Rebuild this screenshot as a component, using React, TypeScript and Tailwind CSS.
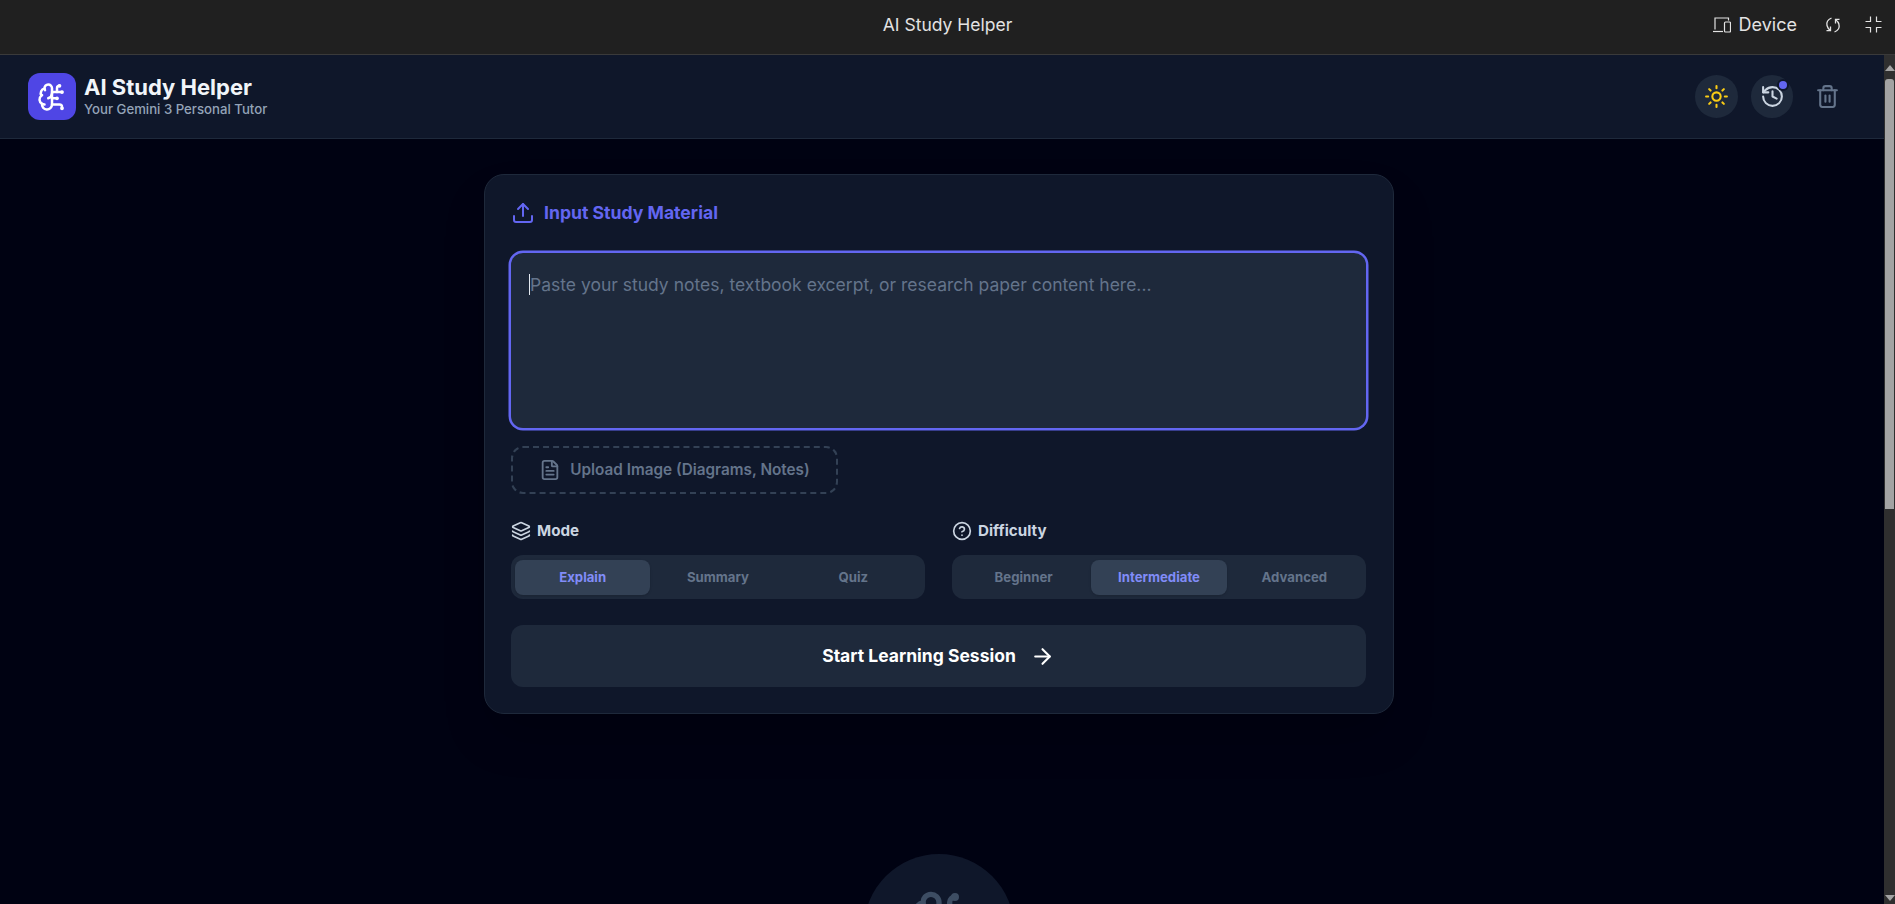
import React from "react";
import {
  ArrowRight,
  BrainCircuit,
  CircleHelp,
  FileText,
  History,
  Layers,
  Sun,
  Trash2,
  Upload,
} from "lucide-react";

const Segmented = ({ items, active }: { items: string[]; active: string }) => (
  <div className="grid grid-cols-3 h-11 px-1 pt-[5px] pb-1 rounded-xl bg-[#1e293b]">
    {items.map((item) => (
      <button
        key={item}
        className={`rounded-lg text-[13.2px] font-bold ${
          item === active
            ? "bg-[#334155] text-[#818cf8] shadow-sm"
            : "text-[#64748b]"
        }`}
      >
        {item}
      </button>
    ))}
  </div>
);

const TopBar = () => (
  <div className="relative flex items-center justify-end h-[55px] shrink-0 pb-[5px] bg-[#202020] border-b border-[#3a3a3a] text-[#e3e3e3]">
    <span className="absolute left-0 right-0 pt-[2px] text-center text-[17.5px]">AI Study Helper</span>
    <div className="flex items-center pr-[13px]">
      <svg width="18" height="16" viewBox="0 0 18 16" fill="none" stroke="currentColor" strokeWidth="1.2" className="mr-[8px]">
        <path d="M2 12.500V1h13.500v2.500" />
        <path d="M0 14.500h10" />
        <rect x="11.500" y="5" width="6" height="10" rx="1" />
      </svg>
      <span className="text-[18px] mr-[28px]">Device</span>
      <svg width="16" height="16" viewBox="0 0 16 16" fill="none" stroke="currentColor" strokeWidth="1.3" className="mr-[24px]">
        <path d="M6.500 1C3 2.500 1.300 5.500 2 8.500c.4 2 1.500 3.500 3.500 5" />
        <path d="M5.500 9.500v4.200H1.500" />
        <path d="M9.500 15c3.500-1.500 5.200-4.500 4.500-7.500-.4-2-1.500-3.500-3.500-5" />
        <path d="M10.500 6.500V2.300h4" />
      </svg>
      <svg width="17" height="17" viewBox="0 0 17 17" fill="none" stroke="currentColor" strokeWidth="1.2">
        <path d="M5.500 0.500v5H0.500M11.500 0.500v5H16.500M5.500 16.500v-5H0.500M11.500 16.500v-5H16.500" />
      </svg>
    </div>
  </div>
);

const Header = () => (
  <header className="flex items-center justify-between h-[84px] shrink-0 pl-[28px] pr-[36px] bg-[#0f172a] border-b border-[#1e293b]">
    <div className="flex items-center gap-2">
      <div className="flex items-center justify-center w-12 h-[47px] rounded-xl bg-[#4f46e5] text-white">
        <BrainCircuit size={30} strokeWidth={2} />
      </div>
      <div className="pb-[3px]">
        <h1 className="text-[22px] leading-[28px] font-bold text-[#f1f5f9]">AI Study Helper</h1>
        <p className="text-[13.2px] leading-[16px] font-medium text-[#94a3b8]">Your Gemini 3 Personal Tutor</p>
      </div>
    </div>
    <div className="flex items-center gap-[13px]">
      <button className="flex items-center justify-center w-[43px] h-[43px] rounded-full bg-[#1e293b] text-[#facc15]">
        <Sun size={25} />
      </button>
      <button className="relative flex items-center justify-center w-[42px] h-[43px] rounded-full bg-[#1e293b] text-[#cbd5e1]">
        <History size={25} />
        <span className="absolute top-[6px] right-[6px] w-2 h-2 rounded-full bg-[#6366f1] ring-2 ring-[#0f172a]" />
      </button>
      <button className="flex items-center justify-center w-[42px] h-[43px] text-[#64748b]">
        <Trash2 size={25} />
      </button>
    </div>
  </header>
);

const Card = () => (
  <section className="w-[910px] rounded-[20px] pl-[26px] pr-[27px] pt-[26px] pb-[26px] bg-[#0f172a] border border-[#1e293b] shadow-2xl">
    <div className="flex items-center gap-[9px] h-[24px] mb-[28px] text-[#6366f1]">
      <Upload size={24} />
      <h2 className="pt-[1px] text-[17.6px] font-bold">Input Study Material</h2>
    </div>
    <div className="h-[175px] px-[18px] py-[18px] rounded-xl ring-[2.5px] ring-[#6366f1] bg-[#1e293b] text-[17.5px] leading-[28px] text-[#64748b]">
      <span className="inline-block w-px h-[21px] -mb-[4px] bg-[#e2e8f0]" />
      Paste your study notes, textbook excerpt, or research paper content here...
    </div>
    <div className="flex items-center justify-center gap-[9px] w-[327px] h-[48px] mt-[18px] rounded-xl border-2 border-dashed border-[#334155] text-[15.3px] font-semibold text-[#64748b]">
      <FileText size={22} />
      Upload Image (Diagrams, Notes)
    </div>
    <div className="grid grid-cols-2 gap-[27px] mt-[27px]">
      <div>
        <div className="flex items-center gap-[6px] h-[20px] mb-[14px] text-[15.2px] font-bold text-[#cbd5e1]">
          <Layers size={20} />
          Mode
        </div>
        <Segmented items={["Explain", "Summary", "Quiz"]} active="Explain" />
      </div>
      <div>
        <div className="flex items-center gap-[6px] h-[20px] mb-[14px] text-[15.2px] font-bold text-[#cbd5e1]">
          <CircleHelp size={20} />
          Difficulty
        </div>
        <Segmented items={["Beginner", "Intermediate", "Advanced"]} active="Intermediate" />
      </div>
    </div>
    <button className="flex items-center justify-center gap-[14px] w-full h-[62px] mt-[26px] rounded-xl bg-[#1e293b] text-[17.5px] font-bold text-white">
      Start Learning Session
      <ArrowRight size={25} />
    </button>
  </section>
);

const ScrollBar = () => (
  <div className="flex flex-col justify-between items-center w-[11px] shrink-0 bg-[#2f2f2f] pt-[10px] pb-[3px]">
    <div className="flex flex-col items-center gap-[8px]">
      <span className="w-0 h-0 border-x-[5px] border-x-transparent border-b-[6px] border-b-[#a3a3a3]" />
      <span className="w-[9px] h-[430px] rounded-t-[3px] bg-[#a3a3a3]" />
    </div>
    <span className="w-0 h-0 border-x-[5px] border-x-transparent border-t-[6px] border-t-[#a3a3a3]" />
  </div>
);

export default function App() {
  return (
    <div className="flex flex-col h-screen overflow-hidden bg-[#000212] font-['Inter',sans-serif]">
      <TopBar />
      <div className="flex flex-1 min-h-0">
        <div className="flex-1 min-w-0 overflow-hidden">
          <Header />
          <main className="flex flex-col items-center pt-[35px] pr-[6px]">
            <Card />
            <div className="flex items-start justify-center shrink-0 w-[150px] h-[150px] pt-[35px] mt-[140px] rounded-full bg-[#0f172a] text-[#3d4d63]">
              <BrainCircuit size={64} />
            </div>
          </main>
        </div>
        <ScrollBar />
      </div>
    </div>
  );
}
